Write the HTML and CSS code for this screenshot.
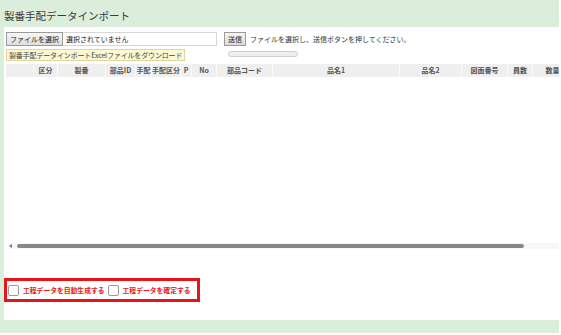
FILE: index.html
```html
<!DOCTYPE html>
<html lang="ja">
<head>
    <meta charset="UTF-8">
    <title>製番手配データインポート</title>
    <link rel="stylesheet" href="styles.css">
</head>
<body>
    <div class="page">
        <div class="title">製番手配データインポート</div>
        <div class="panel">
            <div class="upload-row">
                <div class="file-box">
                    <span class="file-btn">ファイルを選択</span>
                    <span class="file-name">選択されていません</span>
                </div>
                <span class="send-btn">送信</span>
                <span class="hint">ファイルを選択し、送信ボタンを押してください。</span>
            </div>
            <div class="download-row">
                <a class="download" href="#">製番手配データインポートExcelファイルをダウンロード</a>
                <div class="progress"></div>
            </div>
            <div class="grid">
                <div class="grid-head">
                    <div class="col w28"></div>
                    <div class="col w24">区分</div>
                    <div class="col w48">製番</div>
                    <div class="col w30">部品ID</div>
                    <div class="col w16">手配</div>
                    <div class="col w29">手配区分</div>
                    <div class="col w11">P</div>
                    <div class="col w25">No</div>
                    <div class="col w56">部品コード</div>
                    <div class="col w127">品名1</div>
                    <div class="col w62">品名2</div>
                    <div class="col w46">図面番号</div>
                    <div class="col w25">員数</div>
                    <div class="col w40">数量</div>
                </div>
                <div class="grid-body"></div>
                <div class="hscroll">
                    <span class="arrow"></span>
                    <span class="thumb"></span>
                </div>
            </div>
            <div class="options">
                <label class="opt"><span class="check"></span>工程データを自動生成する</label>
                <label class="opt"><span class="check"></span>工程データを確定する</label>
            </div>
        </div>
    </div>
</body>
</html>
```

FILE: styles.css
```css
body {
    margin: 0;
    background: #fff;
    font-family: "Noto Sans CJK JP", "Noto Sans", sans-serif;
    color: #333;
    overflow: hidden;
}
.page {
    width: 559px;
    height: 333px;
    background: #dbeedb;
    padding-left: 4px;
    box-sizing: border-box;
}
.title {
    height: 27px;
    font-size: 10.5px;
    line-height: 12px;
    padding-top: 10px;
    box-sizing: border-box;
    color: #3a3a3a;
}
.panel {
    background: #fff;
    height: 293px;
    padding-left: 2px;
    overflow: hidden;
}
.upload-row {
    display: flex;
    align-items: center;
    height: 14px;
    padding-top: 5px;
    font-size: 7px;
}
.file-box {
    display: flex;
    width: 211px;
    height: 14px;
    border: 1px solid #d6d6d6;
    box-sizing: border-box;
    align-items: center;
}
.file-btn {
    height: 14px;
    line-height: 12px;
    padding: 0 3px;
    background: linear-gradient(#f6f6f6, #dedede);
    border: 1px solid #9a9a9a;
    box-sizing: border-box;
    margin: -1px 0 0 -1px;
    color: #222;
}
.file-name {
    padding-left: 3px;
    color: #222;
}
.send-btn {
    margin-left: 7px;
    height: 14px;
    line-height: 12px;
    padding: 0 3px;
    background: linear-gradient(#f4f4f4, #dcdcdc);
    border: 1px solid #9a9a9a;
    box-sizing: border-box;
    color: #222;
}
.hint {
    margin-left: 4px;
    color: #333;
}
.download-row {
    display: flex;
    align-items: center;
    margin-top: 3px;
    height: 12px;
}
.download {
    font-size: 7px;
    line-height: 10px;
    padding: 0 2px;
    background: #fbf8d3;
    border: 1px solid #ddd59a;
    color: #444;
    text-decoration: none;
    white-space: nowrap;
    letter-spacing: -0.15px;
    flex: none;
}
.progress {
    margin-left: auto;
    margin-right: 261px;
    width: 68px;
    height: 4px;
    border: 1px solid #cfcfcf;
    border-radius: 3px;
    background: #efefef;
    margin-top: -2px;
}
.grid {
    margin-top: 3px;
}
.grid-head {
    display: flex;
    height: 13px;
    background: #efefef;
    width: 600px;
}
.col {
    flex: none;
    font-size: 7px;
    font-weight: bold;
    line-height: 13px;
    text-align: center;
    color: #555;
    border-right: 1px solid #fafafa;
    box-sizing: border-box;
    white-space: nowrap;
    overflow: hidden;
}
.w11 { width: 11px; }
.w16 { width: 16px; }
.w24 { width: 24px; }
.w25 { width: 25px; }
.w28 { width: 28px; }
.w29 { width: 29px; text-align: left; }
.w30 { width: 30px; }
.w40 { width: 40px; }
.w46 { width: 46px; }
.w48 { width: 48px; }
.w56 { width: 56px; }
.w62 { width: 62px; }
.w127 { width: 127px; }
.grid-body {
    height: 166px;
}
.hscroll {
    display: flex;
    align-items: center;
    height: 6px;
    background: #f7f7f7;
    margin-left: 2px;
}
.arrow {
    width: 0;
    height: 0;
    border-top: 2px solid transparent;
    border-bottom: 2px solid transparent;
    border-right: 3px solid #777;
    margin-left: 1px;
}
.thumb {
    margin-left: 5px;
    width: 507px;
    height: 4px;
    border-radius: 2px;
    background: #888;
}
.options {
    display: inline-flex;
    align-items: center;
    margin-top: 29px;
    margin-left: -2px;
    width: 196px;
    height: 24px;
    border: 3px solid #e8141c;
    box-sizing: border-box;
    padding-left: 1px;
    gap: 3px;
}
.opt {
    display: flex;
    align-items: center;
    font-size: 6.8px;
    font-weight: bold;
    color: #e8141c;
}
.check {
    width: 9px;
    height: 9px;
    border: 1px solid #9a9a9a;
    border-radius: 2px;
    background: #fff;
    margin-right: 4px;
}
```
